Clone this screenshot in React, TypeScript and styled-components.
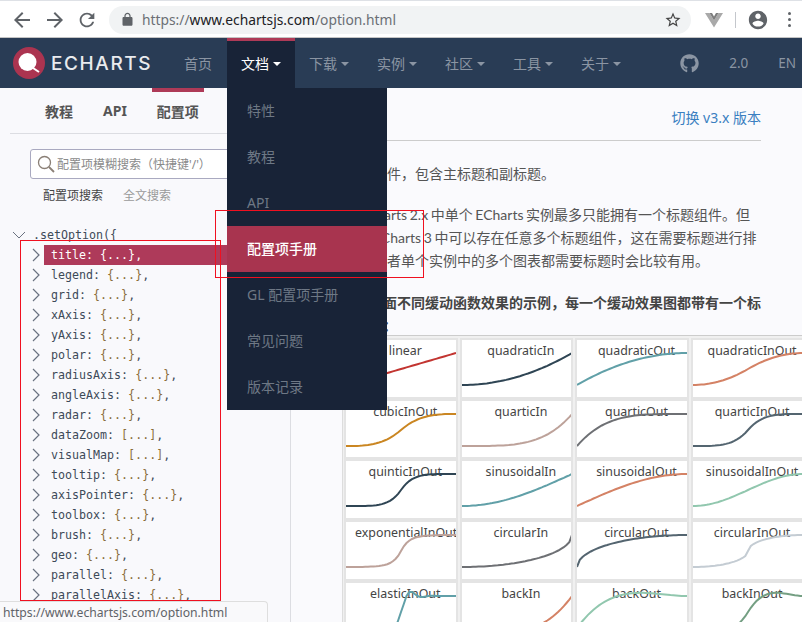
import styled, { createGlobalStyle } from 'styled-components';
import { FaGithub } from 'react-icons/fa';

const GlobalStyle = createGlobalStyle`
  html, body {
    margin: 0;
    padding: 0;
    background: #fafafd;
  }
  * {
    box-sizing: border-box;
  }
  body {
    font-family: 'Noto Sans', 'Noto Sans CJK SC', sans-serif;
  }
`;

const navItems = [
  { label: '文档', caret: true, active: true },
  { label: '下载', caret: true },
  { label: '实例', caret: true },
  { label: '社区', caret: true },
  { label: '工具', caret: true },
  { label: '关于', caret: true },
];

const menuItems = ['特性', '教程', 'API', '配置项手册', 'GL 配置项手册', '常见问题', '版本记录'];

const treeRows = [
  ['title', '{...}'],
  ['legend', '{...}'],
  ['grid', '{...}'],
  ['xAxis', '{...}'],
  ['yAxis', '{...}'],
  ['polar', '{...}'],
  ['radiusAxis', '{...}'],
  ['angleAxis', '{...}'],
  ['radar', '{...}'],
  ['dataZoom', '[...]'],
  ['visualMap', '[...]'],
  ['tooltip', '{...}'],
  ['axisPointer', '{...}'],
  ['toolbox', '{...}'],
  ['brush', '{...}'],
  ['geo', '{...}'],
  ['parallel', '{...}'],
  ['parallelAxis', '{...}'],
];

type Ease = (t: number) => number;

const inOut = (f: Ease): Ease => (t) => (t < 0.5 ? f(t * 2) / 2 : 1 - f((1 - t) * 2) / 2);
const out = (f: Ease): Ease => (t) => 1 - f(1 - t);
const quad: Ease = (t) => t * t;
const cubic: Ease = (t) => t * t * t;
const quart: Ease = (t) => t ** 4;
const quint: Ease = (t) => t ** 5;
const sine: Ease = (t) => 1 - Math.cos((t * Math.PI) / 2);
const expo: Ease = (t) => (t === 0 ? 0 : 1024 ** (t - 1));
const circ: Ease = (t) => 1 - Math.sqrt(1 - t * t);
const back: Ease = (t) => t * t * (2.70158 * t - 1.70158);
const elasticInOut: Ease = (t) => {
  if (t === 0 || t === 1) return t;
  const k = t * 2;
  const wave = (v: number) => Math.sin(((v - 0.1) * 2 * Math.PI) / 0.4);
  if (k < 1) return -0.5 * 2 ** (10 * (k - 1)) * wave(k - 1);
  return 2 ** (-10 * (k - 1)) * wave(k - 1) * 0.5 + 1;
};
const backInOut: Ease = (t) => {
  const s = 1.70158 * 1.525;
  const k = t * 2;
  if (k < 1) return 0.5 * (k * k * ((s + 1) * k - s));
  const m = k - 2;
  return 0.5 * (m * m * ((s + 1) * m + s) + 2);
};

const curves: { name: string; color: string; ease: Ease }[] = [
  { name: 'linear', color: '#c23531', ease: (t) => t },
  { name: 'quadraticIn', color: '#2f4554', ease: quad },
  { name: 'quadraticOut', color: '#61a0a8', ease: out(quad) },
  { name: 'quadraticInOut', color: '#d48265', ease: inOut(quad) },
  { name: 'cubicInOut', color: '#ca8622', ease: inOut(cubic) },
  { name: 'quarticIn', color: '#bda29a', ease: quart },
  { name: 'quarticOut', color: '#6e7074', ease: out(quart) },
  { name: 'quarticInOut', color: '#546570', ease: inOut(quart) },
  { name: 'quinticInOut', color: '#2f4554', ease: inOut(quint) },
  { name: 'sinusoidalIn', color: '#61a0a8', ease: sine },
  { name: 'sinusoidalOut', color: '#d48265', ease: out(sine) },
  { name: 'sinusoidalInOut', color: '#91c7ae', ease: inOut(sine) },
  { name: 'exponentialInOut', color: '#bda29a', ease: inOut(expo) },
  { name: 'circularIn', color: '#6e7074', ease: circ },
  { name: 'circularOut', color: '#546570', ease: out(circ) },
  { name: 'circularInOut', color: '#c4ccd3', ease: inOut(circ) },
  { name: 'elasticInOut', color: '#61a0a8', ease: elasticInOut },
  { name: 'backIn', color: '#d48265', ease: back },
  { name: 'backOut', color: '#91c7ae', ease: out(back) },
  { name: 'backInOut', color: '#749f83', ease: backInOut },
];

function curvePath(ease: Ease) {
  const points: string[] = [];
  for (let i = 0; i <= 40; i++) {
    const t = i / 40;
    points.push(`${(t * 110).toFixed(1)},${(45 - ease(t) * 32).toFixed(1)}`);
  }
  return `M${points.join('L')}`;
}

function MaterialIcon({ d, size = 24, color = '#5f6368' }: { d: string; size?: number; color?: string }) {
  return (
    <svg width={size} height={size} viewBox='0 0 24 24' fill={color}>
      <path d={d} />
    </svg>
  );
}

export default function App() {
  return (
    <Page>
      <GlobalStyle />
      <BrowserBar>
        <MaterialIcon d='M20 11H7.83l5.59-5.59L12 4 4 12l8 8 1.41-1.41L7.83 13H20v-2z' />
        <ToolSlot>
          <MaterialIcon d='M12 4l-1.41 1.41L16.17 11H4v2h12.17l-5.58 5.59L12 20l8-8z' />
        </ToolSlot>
        <ToolSlot>
          <MaterialIcon
            size={22}
            d='M17.65 6.35C16.2 4.9 14.21 4 12 4c-4.42 0-7.99 3.58-7.99 8s3.57 8 7.99 8c3.73 0 6.84-2.55 7.73-6h-2.08c-.82 2.33-3.04 4-5.65 4-3.31 0-6-2.69-6-6s2.69-6 6-6c1.66 0 3.14.69 4.22 1.78L13 11h7V4l-2.35 2.35z'
          />
        </ToolSlot>
        <Omnibox>
          <MaterialIcon
            size={15}
            d='M18 8h-1V6c0-2.76-2.24-5-5-5S7 3.24 7 6v2H6c-1.1 0-2 .9-2 2v10c0 1.1.9 2 2 2h12c1.1 0 2-.9 2-2V10c0-1.1-.9-2-2-2zM9 6c0-1.66 1.34-3 3-3s3 1.34 3 3v2H9V6z'
          />
          <UrlText>
            https://<b>www.echartsjs.com</b>/option.html
          </UrlText>
          <MaterialIcon
            size={18}
            color='#444'
            d='M22 9.24l-7.19-.62L12 2 9.19 8.63 2 9.24l5.46 4.73L5.82 21 12 17.27 18.18 21l-1.63-7.03L22 9.24zM12 15.4l-3.76 2.27 1-4.28-3.32-2.88 4.38-.38L12 6.1l1.71 4.04 4.38.38-3.32 2.88 1 4.28L12 15.4z'
          />
        </Omnibox>
        <VueMark width='18' height='16' viewBox='0 0 18 16'>
          <path d='M0 1h4.5L9 8.5 13.5 1H18L9 15.5z' fill='#a9a9a9' />
          <path d='M4.5 1H7l2 3.5L11 1h2.5L9 8.5z' fill='#7d7d7d' />
        </VueMark>
        <BarDivider />
        <MaterialIcon
          size={22}
          d='M12 2C6.48 2 2 6.48 2 12s4.48 10 10 10 10-4.48 10-10S17.52 2 12 2zm0 3c1.66 0 3 1.34 3 3s-1.34 3-3 3-3-1.34-3-3 1.34-3 3-3zm0 14.2c-2.5 0-4.71-1.28-6-3.22.03-1.99 4-3.08 6-3.08 1.99 0 5.97 1.09 6 3.08-1.29 1.94-3.5 3.22-6 3.22z'
        />
        <MenuDots>
          <i />
          <i />
          <i />
        </MenuDots>
      </BrowserBar>

      <Nav>
        <Logo>
          <svg width='32' height='32' viewBox='0 0 32 32'>
            <circle cx='16' cy='16' r='16' fill='#ab3450' />
            <circle cx='14.5' cy='15' r='9' fill='#fff' />
            <path d='M20 21l6 4' stroke='#fff' strokeWidth='2' />
          </svg>
          <LogoText>ECHARTS</LogoText>
        </Logo>
        <NavItem>首页</NavItem>
        {navItems.map((item) => (
          <NavItem key={item.label} $active={item.active}>
            {item.label}
            <Caret />
          </NavItem>
        ))}
        <NavRight>
          <FaGithub size={19} />
          <span>2.0</span>
          <span>EN</span>
        </NavRight>
      </Nav>

      <Body>
        <Sidebar>
          <Tabs>
            <Tab>教程</Tab>
            <Tab>API</Tab>
            <Tab $active>配置项</Tab>
          </Tabs>
          <SearchBox>
            <svg width='18' height='18' viewBox='0 0 18 18' fill='none' stroke='#8a7f76' strokeWidth='1.3'>
              <circle cx='7.5' cy='7.5' r='6' />
              <path d='M12 12l5 5' strokeWidth='1.8' />
            </svg>
            配置项模糊搜索（快捷键'/'）
          </SearchBox>
          <SearchModes>
            <SearchMode $active>配置项搜索</SearchMode>
            <SearchMode>全文搜索</SearchMode>
          </SearchModes>
          <Tree>
            <RootRow>
              <svg width='14' height='8' viewBox='0 0 14 8' fill='none' stroke='#6a7280'>
                <path d='M1 1l6 6 6-6' />
              </svg>
              <span>.setOption(&#123;</span>
            </RootRow>
            {treeRows.map(([key, value], idx) => (
              <TreeRow key={key}>
                <svg width='8' height='14' viewBox='0 0 8 14' fill='none' stroke='#6a7280' strokeWidth='1.2'>
                  <path d='M1 1l6 6-6 6' />
                </svg>
                <TreeLabel $active={idx === 0}>
                  {key}: <Braces $active={idx === 0}>{value}</Braces>,
                </TreeLabel>
              </TreeRow>
            ))}
          </Tree>
        </Sidebar>

        <Main>
          <VersionLink>切换 v3.x 版本</VersionLink>
          <Paragraph>标题组件，包含主标题和副标题。</Paragraph>
          <Paragraph>
            在ECharts 2.x 中单个 ECharts 实例最多只能拥有一个标题组件。但
            <br />
            是在ECharts 3 中可以存在任意多个标题组件，这在需要标题进行排
            <br />
            版，或者单个实例中的多个图表都需要标题时会比较有用。
          </Paragraph>
          <BoldNote>
            下面不同缓动函数效果的示例，每一个缓动效果图都带有一个标
            <br />
            题：
          </BoldNote>
          <ChartGrid>
            {curves.map((curve) => (
              <ChartCard key={curve.name}>
                <ChartTitle>{curve.name}</ChartTitle>
                <CurveSvg viewBox='0 0 110 58'>
                  <path d={curvePath(curve.ease)} fill='none' stroke={curve.color} strokeWidth='2' />
                </CurveSvg>
              </ChartCard>
            ))}
          </ChartGrid>
        </Main>
      </Body>

      <Dropdown>
        {menuItems.map((item) => (
          <MenuItem key={item} $active={item === '配置项手册'}>
            {item}
          </MenuItem>
        ))}
      </Dropdown>

      <TreeHighlight />
      <MenuHighlight />
      <StatusBubble>https://www.echartsjs.com/option.html</StatusBubble>
    </Page>
  );
}

const Page = styled.div`
  position: relative;
  width: 802px;
  height: 622px;
  overflow: hidden;
  display: flex;
  flex-direction: column;
`;

const BrowserBar = styled.div`
  height: 38px;
  flex: none;
  display: flex;
  align-items: center;
  padding: 1px 0 0 10px;
  background: #fff;
  border-top: 1px solid #dee1e6;
  border-bottom: 1px solid #c4c4c4;
`;

const ToolSlot = styled.div`
  display: flex;
  margin-left: 9px;
`;

const Omnibox = styled.div`
  width: 582px;
  height: 28px;
  margin-left: 11px;
  padding: 0 9px 0 11px;
  display: flex;
  align-items: center;
  gap: 7px;
  background: #f1f3f4;
  border-radius: 14px;
`;

const UrlText = styled.div`
  flex: 1;
  font-size: 13.8px;
  color: #6b6f75;

  b {
    font-weight: 400;
    color: #202124;
  }
`;

const VueMark = styled.svg`
  margin-left: 14px;
`;

const BarDivider = styled.div`
  width: 1px;
  height: 16px;
  margin: 0 11px 0 12px;
  background: #c4c7cc;
`;

const MenuDots = styled.div`
  display: flex;
  flex-direction: column;
  gap: 3px;
  margin-left: 19px;

  i {
    width: 3px;
    height: 3px;
    border-radius: 50%;
    background: #5f6368;
  }
`;

const Nav = styled.div`
  height: 50px;
  flex: none;
  display: flex;
  align-items: stretch;
  background: #293c55;
  color: #8b95a3;
  font-size: 14px;
`;

const Logo = styled.div`
  width: 170px;
  flex: none;
  display: flex;
  align-items: center;
  gap: 6px;
  padding-left: 13px;
`;

const LogoText = styled.span`
  font-family: 'Inter', sans-serif;
  font-size: 19px;
  font-weight: 500;
  letter-spacing: 1.6px;
  color: #e9ebee;
`;

const NavItem = styled.div<{ $active?: boolean }>`
  display: flex;
  flex: none;
  align-items: center;
  padding: 0 14px 4px;
  color: ${(p) => (p.$active ? '#fff' : 'inherit')};
  background: ${(p) => (p.$active ? '#182337' : 'transparent')};
  border-top: 3px solid ${(p) => (p.$active ? '#ae3a57' : 'transparent')};

  ${Logo} + & {
    padding-right: 15px;
  }
`;

const Caret = styled.span`
  flex: none;
  width: 8px;
  height: 4px;
  margin: 2px 0 0 4px;
  border-top: 4px solid currentColor;
  border-left: 4px solid transparent;
  border-right: 4px solid transparent;
`;

const NavRight = styled.div`
  margin-left: auto;
  display: flex;
  align-items: center;
  gap: 30px;
  padding: 0 6px 0 0;
  font-size: 13.5px;
`;

const Body = styled.div`
  flex: 1;
  display: flex;
  min-height: 0;
`;

const Sidebar = styled.div`
  width: 291px;
  flex: none;
  padding-left: 10px;
  background: #f9f9fc;
  border-right: 1px solid #dcdde2;
`;

const Tabs = styled.div`
  display: flex;
  height: 46px;
  padding-left: 30px;
  gap: 20px;
  border-bottom: 1px solid #dcdde2;
`;

const Tab = styled.div<{ $active?: boolean }>`
  padding: 9px 5px 0;
  font-size: 14px;
  font-weight: 700;
  color: #555;
  border-top: 4px solid ${(p) => (p.$active ? '#ae3a57' : 'transparent')};
`;

const SearchBox = styled.div`
  display: flex;
  align-items: center;
  gap: 2px;
  width: 260px;
  height: 30px;
  margin: 15px 0 0 20px;
  padding-left: 6px;
  font-size: 12px;
  color: #8a8a8a;
  background: #fff;
  border: 1px solid #a9a9c0;
  border-radius: 3px;
`;

const SearchModes = styled.div`
  display: flex;
  gap: 20px;
  margin: 8px 0 0 33px;
`;

const SearchMode = styled.div<{ $active?: boolean }>`
  font-size: 12px;
  line-height: 18px;
  color: ${(p) => (p.$active ? '#444' : '#9a9a9a')};
`;

const Tree = styled.div`
  margin-top: 20px;
  padding-left: 2px;
  font-family: 'DejaVu Sans Mono', monospace;
  font-size: 11.65px;
  line-height: 20px;
  color: #3d4a58;
`;

const RootRow = styled.div`
  display: flex;
  align-items: center;
  gap: 7px;
`;

const TreeRow = styled.div`
  display: flex;
  align-items: center;
  gap: 4px;
  height: 20px;
  padding-left: 20px;
`;

const TreeLabel = styled.div<{ $active?: boolean }>`
  flex: 1;
  padding-left: 7px;
  color: ${(p) => (p.$active ? '#fff' : 'inherit')};
  background: ${(p) => (p.$active ? '#ae3a5a' : 'transparent')};
`;

const Braces = styled.span<{ $active?: boolean }>`
  color: ${(p) => (p.$active ? '#fff' : '#8a6d3b')};
`;

const Main = styled.div`
  flex: 1;
  min-width: 0;
  padding: 0 41px 0 54px;
`;

const VersionLink = styled.div`
  padding-top: 20px;
  height: 53px;
  font-size: 14px;
  line-height: 20px;
  text-align: right;
  color: #3a7fc1;
  border-bottom: 1px solid #ccc;
`;

const Paragraph = styled.p`
  margin: 18px 0 0;
  font-family: 'Lato', 'Noto Sans CJK SC', sans-serif;
  font-size: 14px;
  line-height: 23px;
  word-spacing: -1px;
  white-space: nowrap;
  color: #555;

  &:first-of-type {
    margin-top: 21px;
  }
`;

const BoldNote = styled.p`
  margin: 19px 0 0;
  padding-left: 24px;
  font-size: 14px;
  line-height: 23px;
  font-weight: 700;
  white-space: nowrap;
  color: #444;
`;

const ChartGrid = styled.div`
  display: grid;
  grid-template-columns: repeat(4, 113.6px);
  grid-auto-rows: 60.7px;
  column-gap: 2px;
  width: 470px;
  margin: -2px 0 0 -3px;
  padding: 2px 0 0 1px;
  background: #f0f0f0;
  border-top: 1px solid #ccc;
  border-left: 1px solid #ddd;
`;

const ChartCard = styled.div`
  position: relative;
  overflow: hidden;
  background: #fff;
  border: 2px solid #e4e4e4;
  font-size: 12.4px;
  color: #444;
`;

const ChartTitle = styled.div`
  padding-left: 9px;
  text-align: center;
  line-height: 22px;
  white-space: nowrap;
`;

const CurveSvg = styled.svg`
  position: absolute;
  top: 0;
  left: 0;
  width: 110px;
  height: 58px;
`;

const Dropdown = styled.div`
  position: absolute;
  top: 88px;
  left: 227px;
  width: 160px;
  background: #182337;
`;

const MenuItem = styled.div<{ $active?: boolean }>`
  height: 46px;
  padding-left: 20px;
  font-size: 14px;
  line-height: 46px;
  font-weight: ${(p) => (p.$active ? 500 : 400)};
  color: ${(p) => (p.$active ? '#fff' : '#6e7885')};
  background: ${(p) => (p.$active ? '#a8344f' : 'transparent')};
`;

const TreeHighlight = styled.div`
  position: absolute;
  left: 20px;
  top: 240px;
  width: 201px;
  height: 361px;
  border: 1px solid #f01020;
`;

const MenuHighlight = styled.div`
  position: absolute;
  left: 215px;
  top: 210px;
  width: 209px;
  height: 68px;
  border: 1px solid #f01020;
`;

const StatusBubble = styled.div`
  position: absolute;
  left: 0;
  bottom: 0;
  width: 268px;
  height: 21px;
  padding-left: 3px;
  font-size: 12.2px;
  line-height: 21px;
  color: #5f6368;
  background: #f9f9fb;
  border-top: 1px solid #dedede;
  border-right: 1px solid #dedede;
  border-top-right-radius: 4px;
`;
